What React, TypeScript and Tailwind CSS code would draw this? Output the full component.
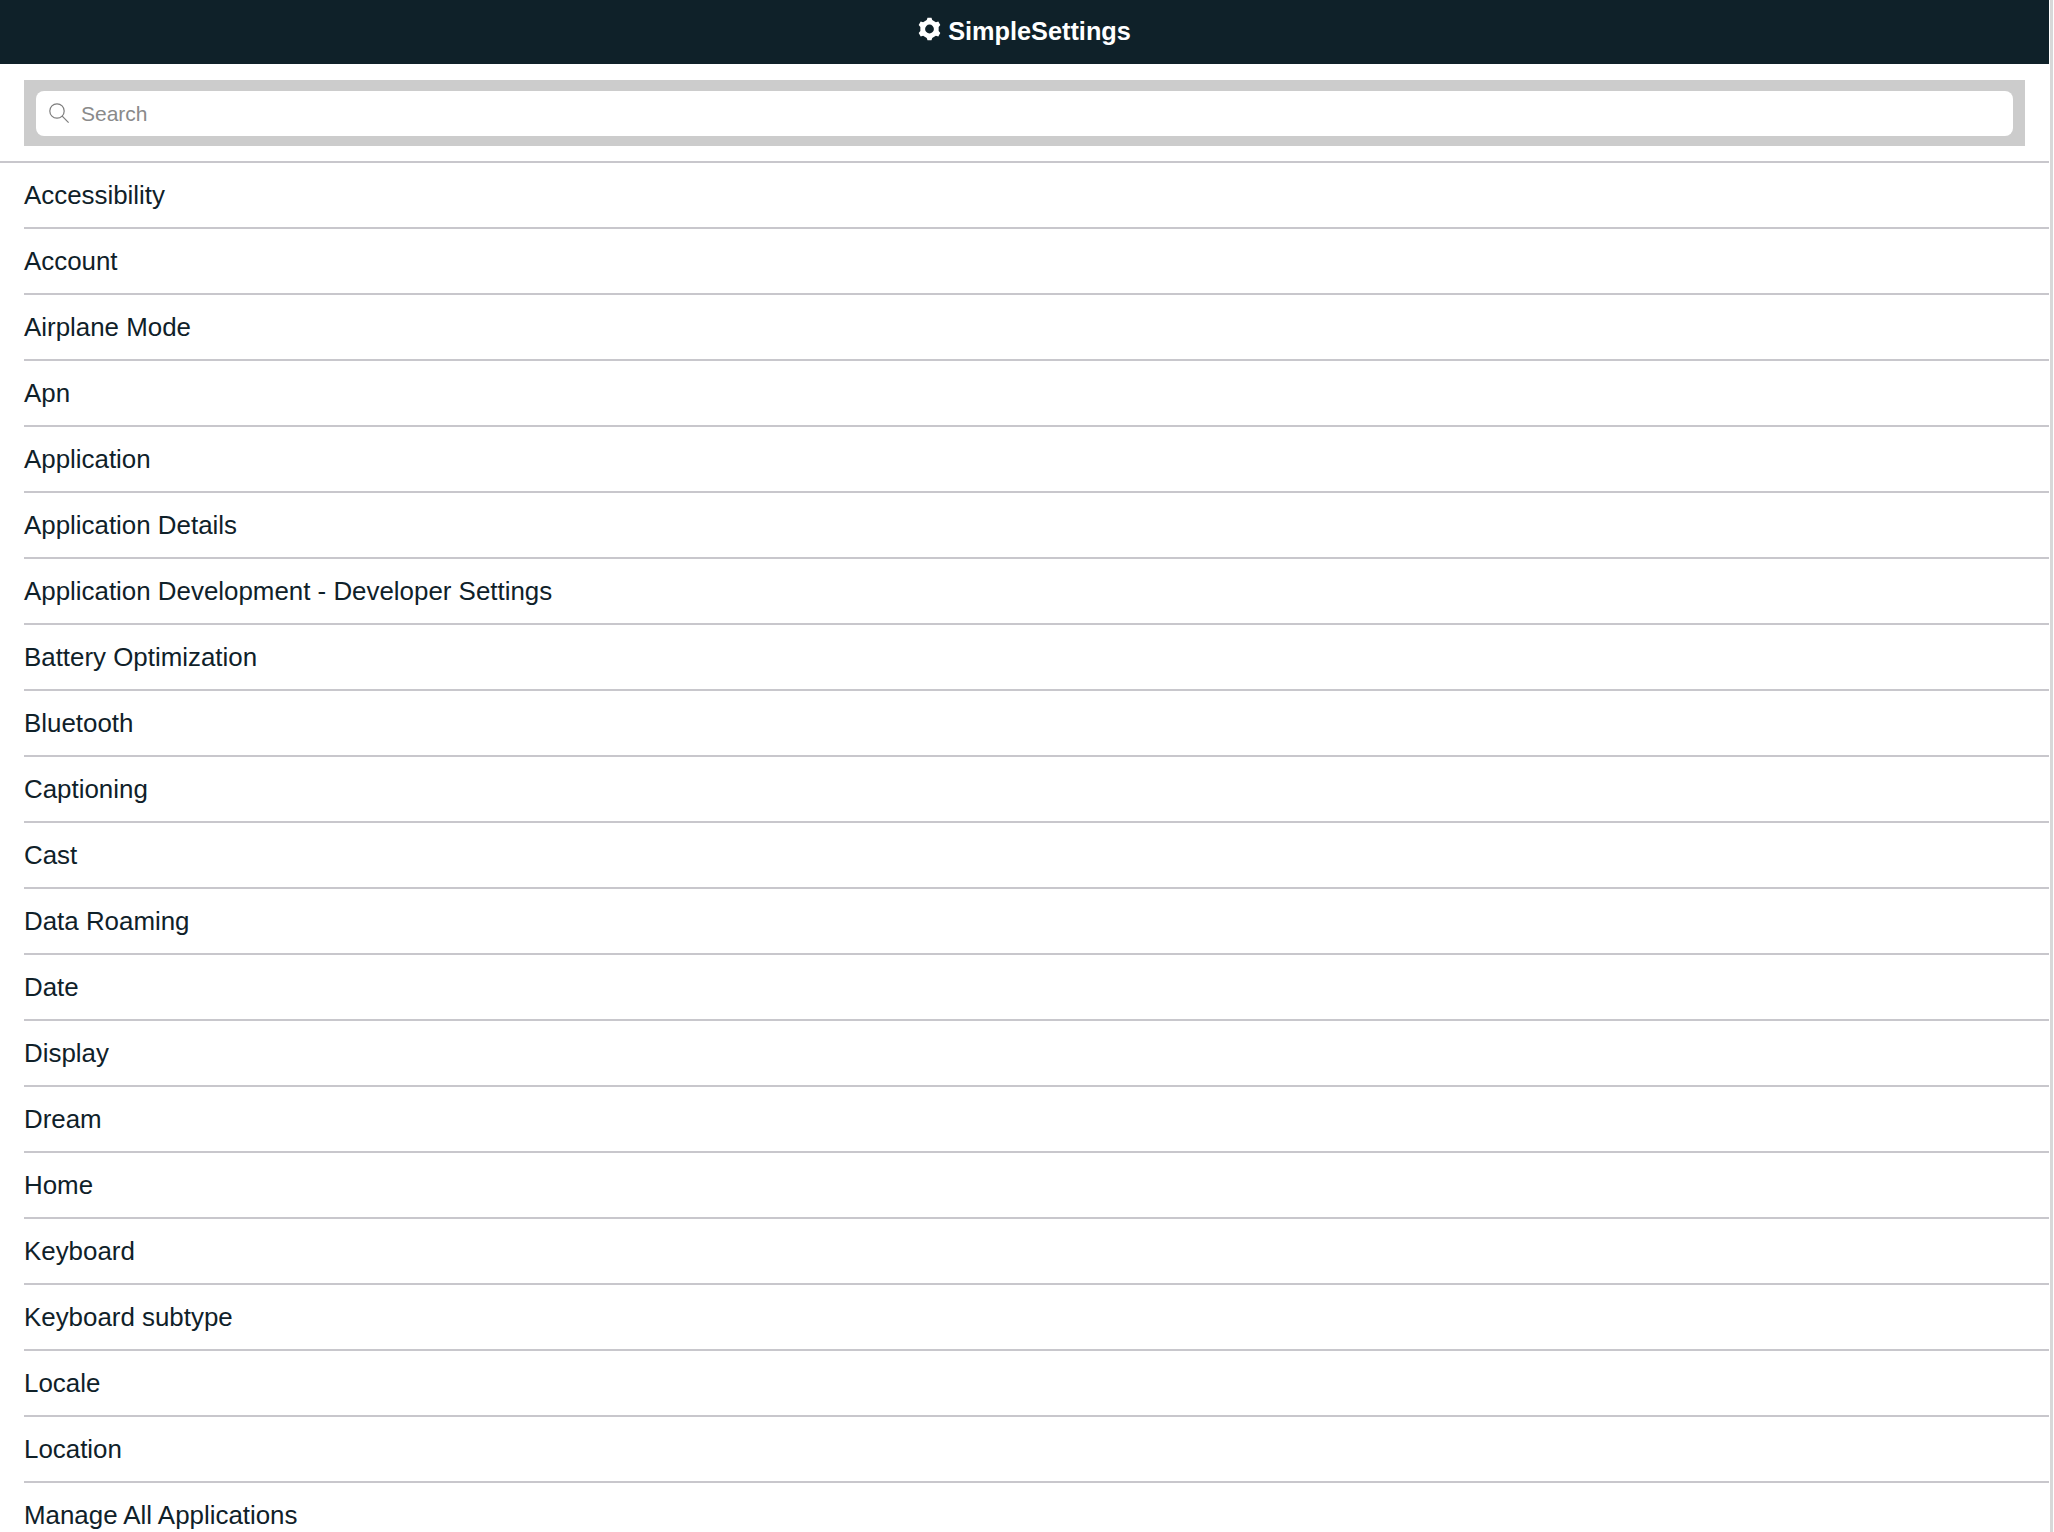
const items = [
  "Accessibility",
  "Account",
  "Airplane Mode",
  "Apn",
  "Application",
  "Application Details",
  "Application Development - Developer Settings",
  "Battery Optimization",
  "Bluetooth",
  "Captioning",
  "Cast",
  "Data Roaming",
  "Date",
  "Display",
  "Dream",
  "Home",
  "Keyboard",
  "Keyboard subtype",
  "Locale",
  "Location",
  "Manage All Applications",
];

// six toothed gear, one tooth straight up
const gearPath = () => {
  const point = (deg: number, r: number) => {
    const a = (deg * Math.PI) / 180;
    return `${(12 + r * Math.sin(a)).toFixed(2)} ${(12 - r * Math.cos(a)).toFixed(2)}`;
  };
  let d = "";
  for (let i = 0; i < 6; i++) {
    const c = i * 60;
    d += `${i === 0 ? "M" : "L"}${point(c - 17, 9.8)} L${point(c - 10, 12)} L${point(c + 10, 12)} L${point(c + 17, 9.8)} `;
  }
  return `${d}Z M12 7.4 a4.6 4.6 0 1 0 0 9.2 a4.6 4.6 0 1 0 0-9.2Z`;
};

const GearIcon = () => (
  <svg viewBox="0 0 24 24" className="w-[23px] h-[24px] mr-[7px] mb-[6px]">
    <path fill="#fff" fillRule="evenodd" d={gearPath()} />
  </svg>
);

const SearchIcon = () => (
  <svg viewBox="0 0 20 20" className="w-[20px] h-[20px] shrink-0" fill="none" stroke="#7d7d7d" strokeWidth="1.2">
    <circle cx="8" cy="8" r="7.2" />
    <path d="M13.2 13.2 19.6 19.6" />
  </svg>
);

export default function App() {
  return (
    <div className="h-[1532px] overflow-hidden flex bg-white font-['Liberation_Sans',sans-serif]">
      <div className="w-[2049px] shrink-0">
        <header className="h-[64px] bg-[#0f2129] flex items-center justify-center text-white text-[25.3px] font-bold">
          <GearIcon />
          <span>SimpleSettings</span>
        </header>

        <div className="px-[24px] pt-[16px] pb-[15px] border-b-2 border-[#c8c7cc]">
          <div className="h-[66px] bg-[#cccccc] px-[12px] flex items-center">
            <div className="w-full h-[45px] bg-white rounded-[8px] flex items-center px-[13px] gap-[12px]">
              <SearchIcon />
              <span className="text-[21px] text-[#8a8a8a] pt-[2px]">Search</span>
            </div>
          </div>
        </div>

        <ul className="pl-[24px]">
          {items.map((item) => (
            <li
              key={item}
              className="h-[66px] flex items-center border-b-2 border-[#c8c7cc] text-[25.9px] text-[#0f2129]"
            >
              {item}
            </li>
          ))}
        </ul>
      </div>
      <div className="w-[3px] ml-px bg-[#d8d8d8]" />
    </div>
  );
}
